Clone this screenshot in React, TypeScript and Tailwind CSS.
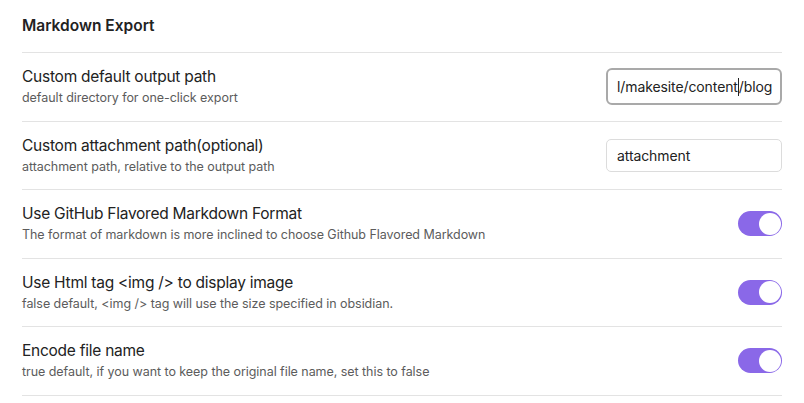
import React from "react";

type Row = {
  title: string;
  desc: string;
  kind: "input" | "toggle";
  value?: string;
  focused?: boolean;
};

const rows: Row[] = [
  {
    title: "Custom default output path",
    desc: "default directory for one-click export",
    kind: "input",
    value: "l/makesite/content/blog",
    focused: true,
  },
  {
    title: "Custom attachment path(optional)",
    desc: "attachment path, relative to the output path",
    kind: "input",
    value: "attachment",
  },
  {
    title: "Use GitHub Flavored Markdown Format",
    desc: "The format of markdown is more inclined to choose Github Flavored Markdown",
    kind: "toggle",
  },
  {
    title: "Use Html tag <img /> to display image",
    desc: "false default, <img /> tag will use the size specified in obsidian.",
    kind: "toggle",
  },
  {
    title: "Encode file name",
    desc: "true default, if you want to keep the original file name, set this to false",
    kind: "toggle",
  },
];

function Toggle() {
  return (
    <div className="w-[44px] h-[25px] rounded-full bg-[#8a68e8] flex items-center justify-end pr-[1px]">
      <div className="w-[22px] h-[22px] rounded-full bg-white" />
    </div>
  );
}

function PathInput({ value, focused }: { value: string; focused?: boolean }) {
  if (focused) {
    return (
      <div className="w-[176px] h-[37px] rounded-[6px] border-2 border-[#a9a9a9] bg-white flex items-center pl-[9px] text-[14px] tracking-[-0.1px] text-[#222] overflow-hidden whitespace-nowrap">
        <span>l/makesite/content</span>
        <span className="inline-block w-[1px] h-[18px] bg-[#222]" />
        <span>/blog</span>
      </div>
    );
  }
  return (
    <div className="w-[176px] h-[33px] rounded-[5px] border border-[#dcdcdc] bg-white flex items-center px-[10px] text-[14px] tracking-[-0.1px] text-[#222] whitespace-nowrap">
      {value}
    </div>
  );
}

export default function App() {
  return (
    <div className="w-[804px] h-[403px] bg-white overflow-hidden font-['Inter',sans-serif]">
      <div className="ml-[22px] w-[760px]">
        <div className="h-[53px] border-b border-[#e3e3e3] flex items-center">
          <h2 className="text-[15.5px] font-semibold text-[#222]">Markdown Export</h2>
        </div>
        {rows.map((r) => (
          <div key={r.title} className="h-[68.5px] border-b border-[#e3e3e3] flex items-center justify-between">
            <div className="flex flex-col gap-[3px]">
              <div className="text-[15.5px] leading-[20px] tracking-[-0.25px] text-[#222]">{r.title}</div>
              <div className="text-[12.5px] leading-[16px] tracking-[-0.05px] text-[#5c5c5c]">{r.desc}</div>
            </div>
            {r.kind === "toggle" ? <Toggle /> : <PathInput value={r.value!} focused={r.focused} />}
          </div>
        ))}
      </div>
    </div>
  );
}
